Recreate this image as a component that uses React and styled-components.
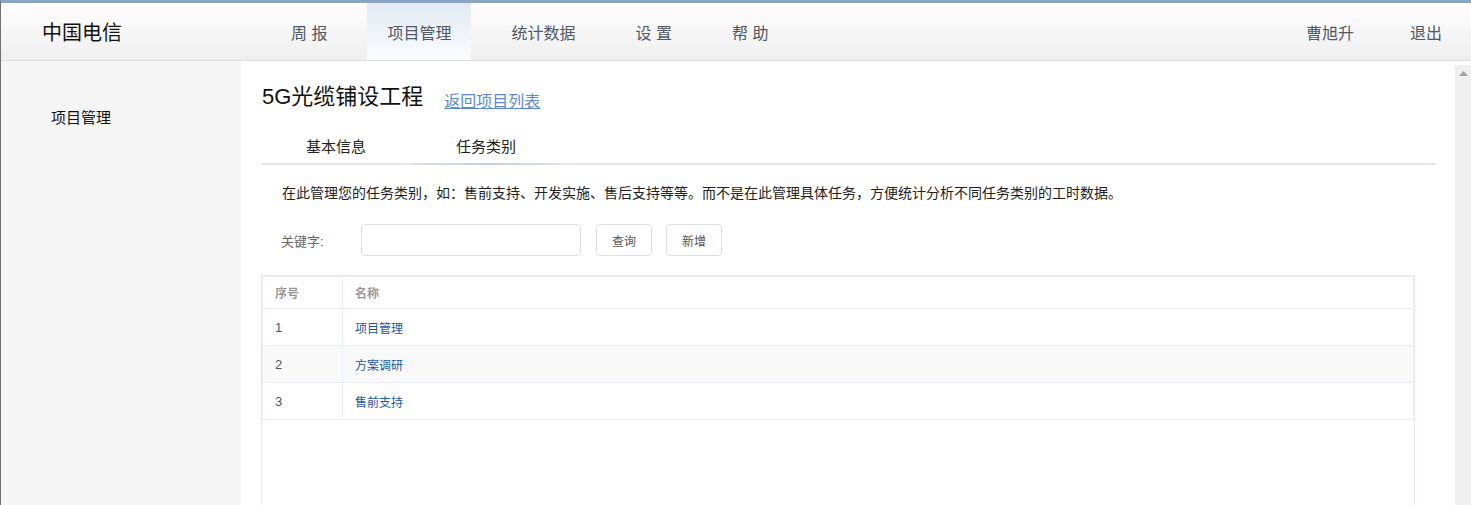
import React from "react";
import styled, { createGlobalStyle } from "styled-components";

const Global = createGlobalStyle`
  html, body { margin: 0; padding: 0; height: 100%; overflow: hidden; }
  body { font-family: "Liberation Sans", "Noto Sans CJK SC", sans-serif; background: #fff; }
  #root { height: 100%; }
  * { box-sizing: border-box; }
`;

const Frame = styled.div`
  height: 100vh;
  display: flex;
  flex-direction: column;
  border-top: 3px solid #8aa5c5;
  border-left: 1px solid #707070;
`;

const Header = styled.header`
  height: 58px;
  flex: none;
  display: flex;
  align-items: stretch;
  background: linear-gradient(#fefefe, #efefef);
  border-bottom: 1px solid #dedede;
  padding-right: 29px;
`;

const Logo = styled.div`
  display: flex;
  align-items: center;
  padding-left: 41px;
  width: 270px;
  font-size: 20px;
  color: #111;
`;

const Nav = styled.nav`
  display: flex;
  gap: 20px;
  flex: 1;
`;

const NavItem = styled.a`
  display: flex;
  align-items: center;
  padding: 0 20px;
  font-size: 16px;
  color: #4e5866;
  white-space: pre;
  cursor: pointer;
  background: ${(p) => (p.$active ? "linear-gradient(#e3eaf4, #fbfcfe)" : "transparent")};
`;

const UserArea = styled.div`
  display: flex;
  align-items: center;
  gap: 56px;
  font-size: 16px;
  color: #4e5866;
`;

const Body = styled.div`
  flex: 1;
  display: flex;
  min-height: 0;
`;

const Sidebar = styled.aside`
  width: 240px;
  flex: none;
  background: #f5f5f5;
  padding: 47px 0 0 50px;
  font-size: 15px;
  line-height: 20px;
  color: #111;
`;

const Main = styled.main`
  flex: 1;
  padding: 21px 19px 0 20px;
  display: flex;
  flex-direction: column;
  min-width: 0;
`;

const TitleRow = styled.div`
  display: flex;
  align-items: baseline;
  gap: 21px;
  padding-left: 1px;
`;

const Title = styled.h1`
  margin: 0;
  font-size: 22px;
  font-weight: normal;
  line-height: 30px;
  color: #111;
`;

const BackLink = styled.a`
  font-size: 16px;
  color: #5a8bc8;
  text-decoration: underline;
  position: relative;
  top: 3px;
  cursor: pointer;
`;

const Tabs = styled.div`
  margin-top: 13px;
  display: flex;
  border-bottom: 2px solid #e4e8ee;
`;

const Tab = styled.div`
  width: 150px;
  height: 40px;
  display: flex;
  align-items: center;
  justify-content: center;
  font-size: 15px;
  color: #222;
  margin-bottom: -2px;
  background: ${(p) =>
    p.$active
      ? "linear-gradient(90deg, #d8e1ee, #c2d0e5 50%, #d8e1ee) bottom / 100% 2px no-repeat"
      : "none"};
`;

const Desc = styled.p`
  margin: 18px 0 0 21px;
  font-size: 14px;
  line-height: 20px;
  color: #222;
`;

const SearchRow = styled.div`
  margin: 21px 0 0 20px;
  display: flex;
  align-items: center;
`;

const Label = styled.span`
  width: 80px;
  font-size: 13px;
  color: #666;
`;

const Input = styled.input`
  width: 220px;
  height: 32px;
  border: 1px solid #dcdfe6;
  border-radius: 4px;
  outline: none;
  padding: 0 10px;
  font-size: 13px;
`;

const Button = styled.button`
  width: 56px;
  height: 32px;
  margin-left: ${(p) => p.$ml}px;
  background: #fff;
  border: 1px solid #dcdfe6;
  border-radius: 4px;
  font-family: inherit;
  font-size: 12px;
  color: #555;
  cursor: pointer;
`;

const TableWrap = styled.div`
  margin: 19px 21px 0 0;
  flex: 1;
  border: 1px solid #e6e9ef;
  border-bottom: none;
`;

const Table = styled.table`
  width: 100%;
  border-collapse: collapse;
  border: 1px solid #e8ecf3;
`;

const Th = styled.th`
  height: 32px;
  text-align: left;
  padding: 0 12px;
  font-size: 12px;
  font-weight: bold;
  color: #999;
  border: 1px solid #ebeef5;
  width: ${(p) => p.$w || "auto"};
`;

const Tr = styled.tr`
  background: ${(p) => (p.$striped ? "#f9f9f9" : "#fff")};
`;

const Td = styled.td`
  height: 37px;
  padding: 0 12px;
  font-size: ${(p) => (p.$link ? "12px" : "13px")};
  color: ${(p) => (p.$link ? "#1b55a5" : "#555")};
  border: 1px solid #ebeef5;
`;

const Scrollbar = styled.div`
  width: 16px;
  flex: none;
  margin-top: 4px;
  background: #f0f0f0;
  display: flex;
  justify-content: center;
  padding-top: 6px;
`;

const rows = [
  { id: 1, name: "项目管理" },
  { id: 2, name: "方案调研" },
  { id: 3, name: "售前支持" },
];

export default function App() {
  return (
    <>
      <Global />
      <Frame>
        <Header>
          <Logo>中国电信</Logo>
          <Nav>
            <NavItem>周 报</NavItem>
            <NavItem $active>项目管理</NavItem>
            <NavItem>统计数据</NavItem>
            <NavItem>设 置</NavItem>
            <NavItem>帮 助</NavItem>
          </Nav>
          <UserArea>
            <span>曹旭升</span>
            <span>退出</span>
          </UserArea>
        </Header>
        <Body>
          <Sidebar>项目管理</Sidebar>
          <Main>
            <TitleRow>
              <Title>5G光缆铺设工程</Title>
              <BackLink>返回项目列表</BackLink>
            </TitleRow>
            <Tabs>
              <Tab>基本信息</Tab>
              <Tab $active>任务类别</Tab>
            </Tabs>
            <Desc>
              在此管理您的任务类别，如：售前支持、开发实施、售后支持等等。而不是在此管理具体任务，方便统计分析不同任务类别的工时数据。
            </Desc>
            <SearchRow>
              <Label>关键字:</Label>
              <Input />
              <Button $ml={15}>查询</Button>
              <Button $ml={14}>新增</Button>
            </SearchRow>
            <TableWrap>
              <Table>
                <thead>
                  <tr>
                    <Th $w="80px">序号</Th>
                    <Th>名称</Th>
                  </tr>
                </thead>
                <tbody>
                  {rows.map((r, i) => (
                    <Tr key={r.id} $striped={i % 2 === 1}>
                      <Td>{r.id}</Td>
                      <Td $link>{r.name}</Td>
                    </Tr>
                  ))}
                </tbody>
              </Table>
            </TableWrap>
          </Main>
          <Scrollbar>
            <svg width="9" height="5" viewBox="0 0 9 5">
              <polygon points="4.5,0 9,5 0,5" fill="#a3a3a3" />
            </svg>
          </Scrollbar>
        </Body>
      </Frame>
    </>
  );
}
